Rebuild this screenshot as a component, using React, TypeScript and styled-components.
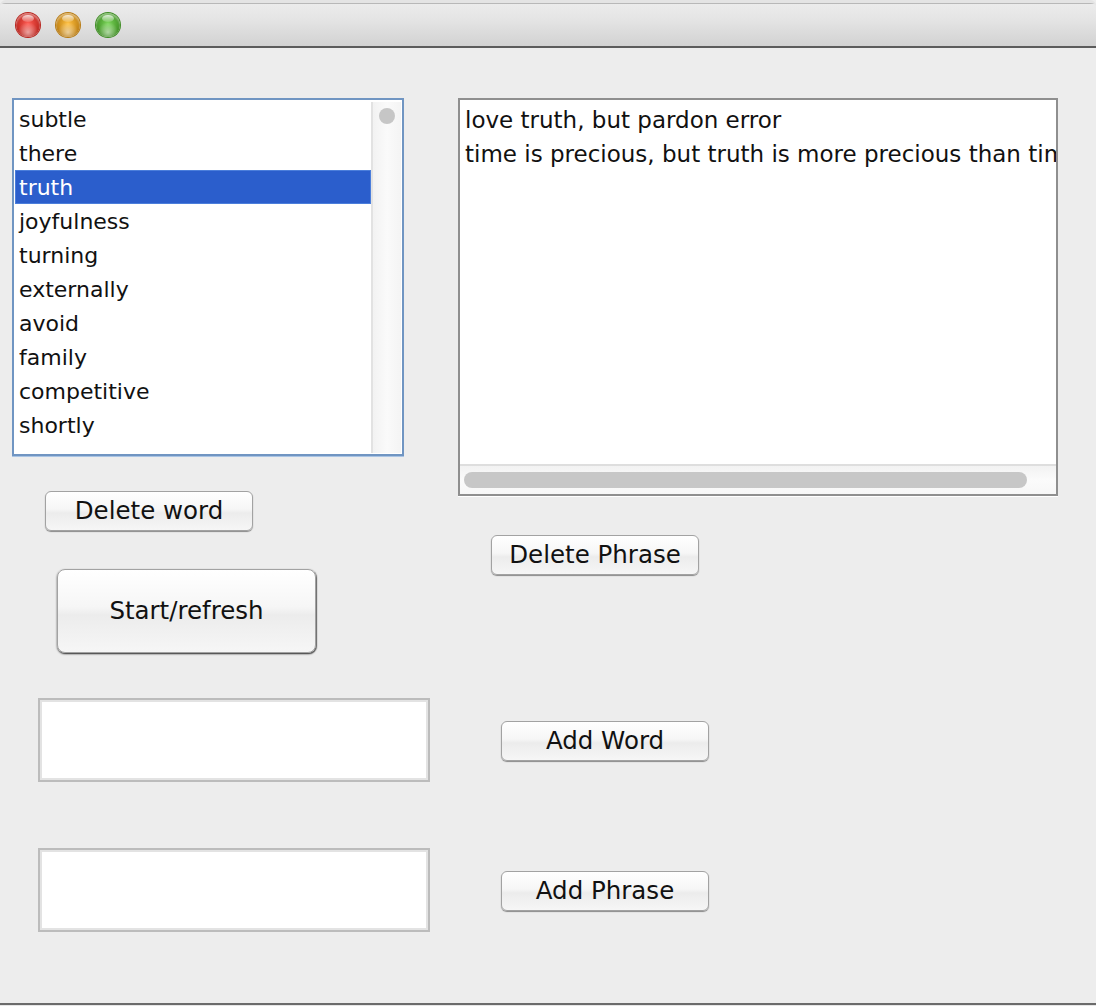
import React from "react";
import styled, { createGlobalStyle } from "styled-components";

const Global = createGlobalStyle`
  html, body { margin: 0; padding: 0; background: #e6e6e6; }
  body { font-family: "DejaVu Sans", "Liberation Sans", sans-serif; }
  * { box-sizing: border-box; }
`;

const Window = styled.div`
  width: 1096px;
  height: 1005px;
  background: #ededed;
  border-bottom: 2px solid #6b6b6b;
  display: flex;
  flex-direction: column;
  font-size: 23px;
  color: #111;
`;

const TitleBar = styled.div`
  height: 48px;
  flex: none;
  border-top: 3px solid #e4e4e4;
  background: linear-gradient(#b8b8b8 0, #b8b8b8 1px, #ececec 1px, #e4e4e4 40%, #d2d2d2 100%);
  border-bottom: 2px solid #5c5c5c;
  display: flex;
  align-items: center;
  padding-left: 16px;
  gap: 16px;
  border-radius: 6px 6px 0 0;
`;

const Light = styled.div<{ $c: string; $d: string }>`
  width: 24px;
  height: 24px;
  margin-top: 1px;
  border-radius: 50%;
  background: radial-gradient(circle at 50% 80%, #fff8 0, transparent 45%),
    radial-gradient(circle at 50% 45%, ${(p) => p.$c} 0, ${(p) => p.$d} 75%);
  box-shadow: 0 0 0 1px ${(p) => p.$d}, inset 0 2px 2px #fff6;
  position: relative;
  &::after {
    content: "";
    position: absolute;
    left: 6px;
    top: 2px;
    width: 12px;
    height: 7px;
    border-radius: 50%;
    background: linear-gradient(#ffffffcc, #ffffff22);
  }
`;

const Content = styled.div`
  flex: 1;
  display: flex;
  padding-left: 12px;
  gap: 28px;
`;

const Column = styled.div<{ $w: number }>`
  width: ${(p) => p.$w}px;
  display: flex;
  flex-direction: column;
  align-items: flex-start;
`;

const Slot = styled.div<{ $mt: number; $ml: number }>`
  margin-top: ${(p) => p.$mt}px;
  margin-left: ${(p) => p.$ml}px;
`;

const ListBox = styled.div`
  width: 392px;
  height: 358px;
  border: 2px solid #7095c2;
  box-shadow: 0 1px 0 #a9c4e4;
  background: #fff;
  display: flex;
  padding: 2px 1px 1px 1px;
  font-size: 22px;
`;

const Rows = styled.div`
  flex: 1;
  display: flex;
  flex-direction: column;
`;

const Row = styled.div<{ $sel?: boolean }>`
  height: 34px;
  line-height: 32px;
  padding: 2px 0 0 4px;
  white-space: nowrap;
  background: ${(p) => (p.$sel ? "#2b5ecc" : "transparent")};
  color: ${(p) => (p.$sel ? "#fff" : "#111")};
  box-shadow: ${(p) => (p.$sel ? "inset 0 0 0 1px #4b7edb" : "none")};
`;

const VScroll = styled.div`
  width: 30px;
  border-left: 2px solid #e2e2e2;
  background: linear-gradient(90deg, #f2f2f2, #fafafa 50%, #f4f4f4);
  display: flex;
  justify-content: center;
  padding-top: 6px;
`;

const Knob = styled.div`
  width: 16px;
  height: 16px;
  border-radius: 50%;
  background: #c6c6c6;
`;

const TextArea = styled.div`
  width: 600px;
  height: 398px;
  border: 2px solid #8f8f8f;
  background: #fff;
  box-shadow: 0 1px 0 #fff;
  display: flex;
  flex-direction: column;
  overflow: hidden;
`;

const Lines = styled.div`
  flex: 1;
  padding: 3px 0 0 5px;
  overflow: hidden;
`;

const Line = styled.div`
  height: 34px;
  line-height: 34px;
  white-space: nowrap;
`;

const HScroll = styled.div`
  height: 30px;
  flex: none;
  border-top: 2px solid #dedede;
  background: linear-gradient(#f2f2f2, #fbfbfb 50%, #f7f7f7);
  padding: 6px 0 0 4px;
`;

const HThumb = styled.div`
  width: 563px;
  height: 16px;
  border-radius: 8px;
  background: #c7c7c7;
`;

const Button = styled.button<{ $w: number; $h: number; $big?: boolean }>`
  width: ${(p) => p.$w}px;
  height: ${(p) => p.$h}px;
  font-family: "DejaVu Sans", "Liberation Sans", sans-serif;
  font-size: 24.5px;
  color: #111;
  border: 1px solid #a2a2a2;
  border-radius: ${(p) => (p.$big ? 8 : 6)}px;
  background: linear-gradient(#ffffff, #f6f6f6 45%, #ececec 55%, #f6f6f6);
  box-shadow: ${(p) =>
    p.$big ? "0 1px 2px #4a4a4a, 1px 1px 1px #777" : "0 1px 1px #8a8a8a"};
  padding: 0 0 1px 0;
  display: flex;
  align-items: center;
  justify-content: center;
`;

const Field = styled.div`
  width: 392px;
  height: 84px;
  background: #fff;
  border: 2px solid #bcbcbc;
  box-shadow: inset 0 0 0 2px #e3e3e3;
`;

const words = [
  "subtle",
  "there",
  "truth",
  "joyfulness",
  "turning",
  "externally",
  "avoid",
  "family",
  "competitive",
  "shortly",
];

export default function App() {
  return (
    <>
      <Global />
      <Window>
        <TitleBar>
          <Light $c="#ff5a52" $d="#b8231c" />
          <Light $c="#ffc040" $d="#b87a10" />
          <Light $c="#7bd65a" $d="#3d8c22" />
        </TitleBar>
        <Content>
          <Column $w={418}>
            <Slot $mt={50} $ml={0}>
              <ListBox>
                <Rows>
                  {words.map((w) => (
                    <Row key={w} $sel={w === "truth"}>
                      {w}
                    </Row>
                  ))}
                </Rows>
                <VScroll>
                  <Knob />
                </VScroll>
              </ListBox>
            </Slot>
            <Slot $mt={35} $ml={33}>
              <Button $w={208} $h={40}>Delete word</Button>
            </Slot>
            <Slot $mt={38} $ml={45}>
              <Button $w={259} $h={84} $big>Start/refresh</Button>
            </Slot>
            <Slot $mt={45} $ml={26}>
              <Field />
            </Slot>
            <Slot $mt={66} $ml={26}>
              <Field />
            </Slot>
          </Column>
          <Column $w={620}>
            <Slot $mt={50} $ml={0}>
              <TextArea>
                <Lines>
                  <Line>love truth, but pardon error</Line>
                  <Line>time is precious, but truth is more precious than time</Line>
                </Lines>
                <HScroll>
                  <HThumb />
                </HScroll>
              </TextArea>
            </Slot>
            <Slot $mt={39} $ml={33}>
              <Button $w={208} $h={40}>Delete Phrase</Button>
            </Slot>
            <Slot $mt={146} $ml={43}>
              <Button $w={208} $h={40}>Add Word</Button>
            </Slot>
            <Slot $mt={110} $ml={43}>
              <Button $w={208} $h={40}>Add Phrase</Button>
            </Slot>
          </Column>
        </Content>
      </Window>
    </>
  );
}
